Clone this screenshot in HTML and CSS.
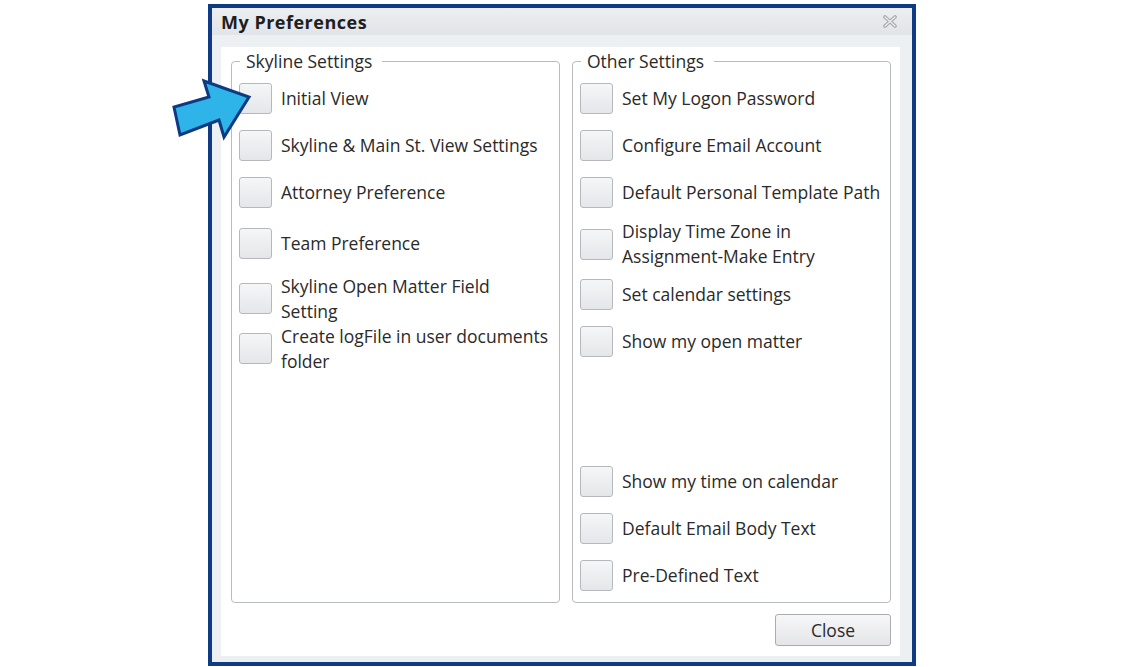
FILE: index.html
```html
<!DOCTYPE html>
<html lang="en">
<head>
  <meta charset="UTF-8" />
  <title>My Preferences</title>
  <link rel="stylesheet" href="styles.css">
</head>
<body>
  <div class="page">
    <div class="dialog">
      <div class="titlebar">
        <span class="title">My Preferences</span>
        <svg class="close-x" width="14" height="13" viewBox="0 0 14 13">
          <path d="M2 2 L12 11 M12 2 L2 11" stroke="#a3a6aa" stroke-width="3.6" stroke-linecap="round"/>
          <path d="M2 2 L12 11 M12 2 L2 11" stroke="#eceef0" stroke-width="1.4" stroke-linecap="round"/>
        </svg>
      </div>

      <div class="body">
        <div class="panel">
          <div class="groups">
            <fieldset class="group group-left">
              <legend>Skyline Settings</legend>
              <div class="row"><span class="check"></span><span class="label">Initial View</span></div>
              <div class="row"><span class="check"></span><span class="label">Skyline &amp; Main St. View Settings</span></div>
              <div class="row"><span class="check"></span><span class="label">Attorney Preference</span></div>
              <div class="row row-55"><span class="check"></span><span class="label">Team Preference</span></div>
              <div class="row row-55"><span class="check"></span><span class="label">Skyline Open Matter Field<br>Setting</span></div>
              <div class="row row-45"><span class="check"></span><span class="label">Create logFile in user documents<br>folder</span></div>
            </fieldset>

            <fieldset class="group group-right">
              <legend>Other Settings</legend>
              <div class="row"><span class="check"></span><span class="label">Set My Logon Password</span></div>
              <div class="row"><span class="check"></span><span class="label">Configure Email Account</span></div>
              <div class="row"><span class="check"></span><span class="label">Default Personal Template Path</span></div>
              <div class="row row-56"><span class="check"></span><span class="label">Display Time Zone in<br>Assignment-Make Entry</span></div>
              <div class="row row-45"><span class="check"></span><span class="label">Set calendar settings</span></div>
              <div class="row row-49"><span class="check"></span><span class="label">Show my open matter</span></div>
              <div class="spacer"></div>
              <div class="row"><span class="check"></span><span class="label">Show my time on calendar</span></div>
              <div class="row"><span class="check"></span><span class="label">Default Email Body Text</span></div>
              <div class="row"><span class="check"></span><span class="label">Pre-Defined Text</span></div>
            </fieldset>
          </div>

          <div class="footer">
            <button class="close-btn">Close</button>
          </div>
        </div>
      </div>
    </div>
  </div>

  <!-- callout arrow pointing at the first checkbox -->
  <svg class="callout" width="90" height="70" viewBox="0 0 90 70">
    <polygon points="37,9 42,25 7,35 13,63 52,48 57,65 82,25"
             fill="#2eb4e9" stroke="#0e3a82" stroke-width="3" stroke-linejoin="miter"/>
  </svg>
</body>
</html>
```

FILE: styles.css
```css
body {
  margin: 0;
  background: #ffffff;
  font-family: "Open Sans", "Noto Sans", sans-serif;
  color: #2a2a2a;
}
.page {
  padding: 4px 0 0 208px;
}
.dialog {
  width: 708px;
  height: 662px;
  box-sizing: border-box;
  border: 4px solid #0f3b86;
  display: flex;
  flex-direction: column;
}
.titlebar {
  height: 27px;
  flex-shrink: 0;
  background: linear-gradient(#eceef1, #e1e4e8);
  display: flex;
  align-items: center;
  justify-content: space-between;
  padding: 0 15px 0 9px;
}
.title {
  font-weight: bold;
  font-size: 18px;
  letter-spacing: 0.5px;
  color: #1e1e1e;
}
.body {
  flex: 1;
  background: #edf0f3;
  padding: 12px 12px 6px 9px;
  display: flex;
}
.panel {
  flex: 1;
  background: #ffffff;
  padding: 2px 9px 0 10px;
}
.groups {
  display: grid;
  grid-template-columns: 329px 319px;
  gap: 12px;
}
.group {
  margin: 0;
  height: 554px;
  box-sizing: border-box;
  border: 1px solid #b8bcc1;
  border-radius: 4px;
  padding: 2px 6px 0 6px;
  min-width: 0;
}
.group legend {
  margin-left: 2px;
  padding: 0 10px 0 6px;
  font-size: 17.5px;
  line-height: 24px;
}
.row {
  height: 47px;
  display: flex;
  align-items: center;
}
.row-45 { height: 45px; }
.row-49 { height: 49px; }
.row-55 { height: 55px; }
.row-56 { height: 56px; }
.spacer {
  height: 92px;
}
.check {
  width: 33px;
  height: 31px;
  box-sizing: border-box;
  flex-shrink: 0;
  border: 1px solid #b5b9be;
  border-radius: 3px;
  background: linear-gradient(#f5f6f7, #e4e6e9);
  margin-left: 1px;
  margin-right: 9px;
}
.label {
  font-size: 17.5px;
  line-height: 25px;
  white-space: nowrap;
}
.footer {
  display: flex;
  justify-content: flex-end;
  padding-top: 11px;
}
.close-btn {
  width: 116px;
  height: 32px;
  border: 1px solid #a9adb2;
  border-radius: 3px;
  background: linear-gradient(#f7f7f8, #e4e5e8);
  font-family: inherit;
  font-size: 17.5px;
  color: #2a2a2a;
  padding: 0;
}
.callout {
  position: absolute;
  left: 167px;
  top: 72px;
}
```
